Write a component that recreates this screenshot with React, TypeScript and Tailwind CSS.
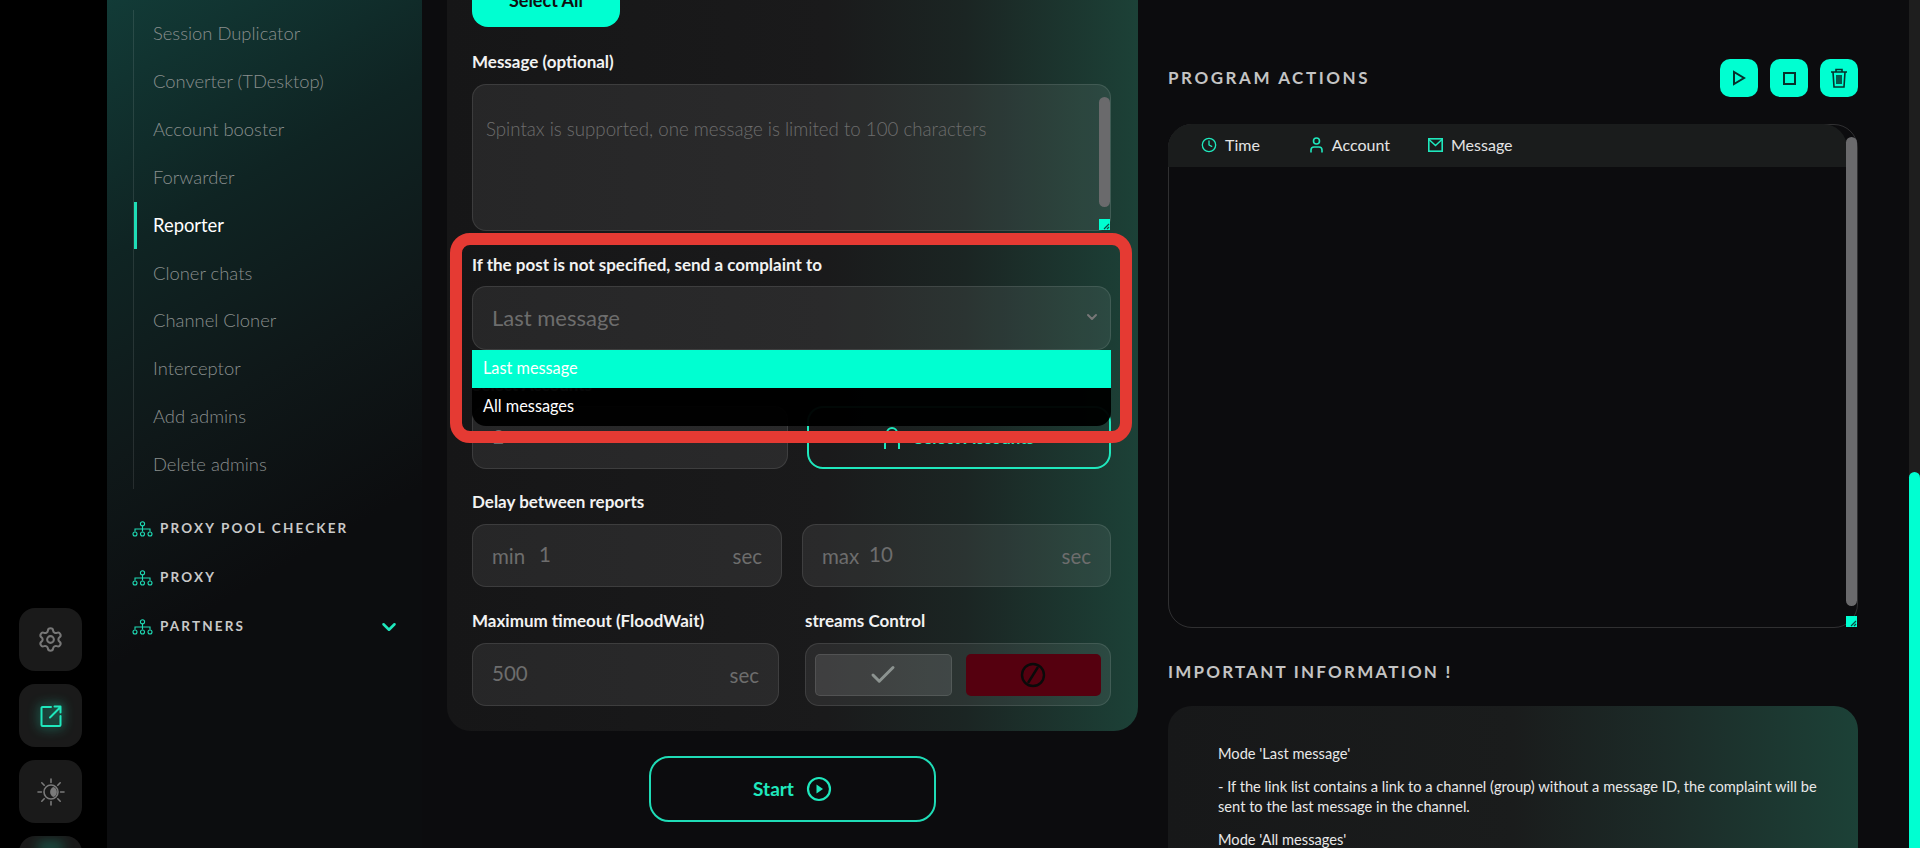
import React from "react";
import { Check, ChevronDown, Clock, Settings } from "lucide-react";

const TOOLS = [
	"Session Duplicator",
	"Converter (TDesktop)",
	"Account booster",
	"Forwarder",
	"Reporter",
	"Cloner chats",
	"Channel Cloner",
	"Interceptor",
	"Add admins",
	"Delete admins",
];

const SECTIONS = ["PROXY POOL CHECKER", "PROXY", "PARTNERS"];

const NetworkIcon = () => (
	<svg width="21" height="16" viewBox="0 0 21 16" fill="none" stroke="#1fdcb6" strokeWidth="1.1" className="shrink-0">
		<circle cx="10.5" cy="2.8" r="2.1" />
		<path d="M10.5 5v3M3 10.5V8h15v2.5M10.5 8v2.5" />
		<circle cx="3" cy="13" r="2" />
		<circle cx="10.5" cy="13" r="2" />
		<circle cx="18" cy="13" r="2" />
	</svg>
);

const ShareIcon = () => (
	<svg width="22" height="22" viewBox="0 0 22 22" fill="none" stroke="#1fe8bd" strokeWidth="2" strokeLinecap="round" strokeLinejoin="round" className="drop-shadow-[0_0_6px_#1fe8bd]">
		<path d="M11 2H2.5a1 1 0 0 0-1 1v17a1 1 0 0 0 1 1h17a1 1 0 0 0 1-1v-9" />
		<path d="M10 12.5 20 2.5M14.5 1.5H20.5V7.5" />
	</svg>
);

const SunMoonIcon = () => (
	<svg width="28" height="28" viewBox="0 0 28 28" fill="none" stroke="#7a7a7a" strokeWidth="1.6" strokeLinecap="round">
		<circle cx="14" cy="14" r="7" />
		<path d="M16.5 9a5.4 5.4 0 0 0 0 10 5.4 5.4 0 0 0 0-10z" fill="#7a7a7a" stroke="none" />
		<path d="M14 1v3.4M14 23.6V27M1 14h3.4M23.6 14H27M4.8 4.8l2.4 2.4M20.8 20.8l2.4 2.4M4.8 23.2l2.4-2.4M20.8 7.2l2.4-2.4" />
	</svg>
);

const SideButton = ({ children }: { children?: React.ReactNode }) => (
	<div className="w-[63px] h-[63px] shrink-0 rounded-[16px] bg-[#1a1a1a] flex items-center justify-center">
		{children}
	</div>
);

const Label = ({ children, className = "" }: { children: React.ReactNode; className?: string }) => (
	<div className={`h-5 leading-5 text-[17px] font-bold text-[#f2f2f2] whitespace-nowrap ${className}`}>
		{children}
	</div>
);

const Resizer = () => (
	<div className="absolute right-0 bottom-0 w-[11px] h-[11px] bg-[#00ffd1] flex items-end justify-end">
		<svg width="7" height="7" viewBox="0 0 7 7" stroke="#0b4a42" strokeWidth="1.2">
			<path d="M1 6 6 1M4 6l2-2" />
		</svg>
	</div>
);

const SecInput = ({ prefix, value, className }: { prefix?: string; value: string; className: string }) => (
	<div className={`h-[63px] rounded-[14px] border border-white/10 bg-white/[0.07] flex items-center pl-[19px] pr-[19px] text-[20.5px] text-[#6d6d6d] ${className}`}>
		{prefix && <span className="w-[47px] mt-[2px]">{prefix}</span>}
		<span className="-mt-[2px]">{value}</span>
		<span className="ml-auto mt-[2px]">sec</span>
	</div>
);

const App = () => (
	<div className="relative flex h-screen overflow-hidden bg-[#0c0c0e] [font-family:Lato,sans-serif]">
		{/* icon strip */}
		<div className="w-[107px] shrink-0 bg-black flex flex-col gap-[13px] pl-[19px] pt-[608px]">
			<SideButton>
				<Settings size={27} color="#777777" strokeWidth={1.8} />
			</SideButton>
			<SideButton>
				<ShareIcon />
			</SideButton>
			<SideButton>
				<SunMoonIcon />
			</SideButton>
			<div className="w-[63px] h-[63px] shrink-0 rounded-[16px] bg-[#1a1a1a] relative overflow-hidden">
				<div className="absolute left-[18px] top-[6px] w-[27px] h-[10px] rounded-full bg-[#1fe8bd]/30 blur-[6px]" />
			</div>
		</div>

		{/* navigation */}
		<div className="w-[315px] shrink-0 bg-[linear-gradient(150deg,#123b37_0%,#0f2423_25%,#0f1819_45%,#0c0d0f_65%)] pl-[26px] pr-[20px]">
			<div className="mt-[10px] border-l border-white/10 h-[479px] flex flex-col">
				{TOOLS.map((name) => {
					const active = name === "Reporter";
					return (
						<div key={name} className="h-[47.9px] shrink-0 flex items-center relative pl-[19px]">
							{active && <div className="absolute left-0 top-0 w-[3px] h-full bg-[#1fdcb6]" />}
							<span className={`text-[18.4px] whitespace-nowrap ${active ? "text-white font-normal" : "text-[#8a8f8e] font-light"}`}>
								{name}
							</span>
						</div>
					);
				})}
			</div>
			<div className="mt-[15px] flex flex-col">
				{SECTIONS.map((name) => (
					<div key={name} className="h-[49px] flex items-center gap-[7px] -ml-[1px]">
						<NetworkIcon />
						<span className="text-[13.5px] font-bold tracking-[0.16em] text-[#c9c9c9] whitespace-nowrap">{name}</span>
						{name === "PARTNERS" && <ChevronDown size={22} color="#1fe8bd" strokeWidth={2.8} className="ml-auto mr-[2px]" />}
					</div>
				))}
			</div>
		</div>

		{/* form */}
		<div className="ml-[25px] w-[691px] shrink-0 flex flex-col items-center -mt-[60px]">
			<div className="relative w-full rounded-[24px] bg-[linear-gradient(90deg,#161617_0%,#1a1a1b_55%,#1b2523_75%,#1c4137_100%)] pt-[33px] pb-[25px] pl-[25px] pr-[27px]">
				<div className="w-[148px] h-[54px] rounded-[16px] bg-[#00ffd1] flex items-center justify-center text-[18px] font-bold text-[#101010]">
					Select All
				</div>

				<Label className="mt-[25px]">Message (optional)</Label>
				<div className="relative mt-[12px] h-[147px] rounded-[14px] border border-white/10 bg-white/[0.07] pl-[13px] pt-[30px] text-[18.7px] font-light text-[#6d6d6d]">
					Spintax is supported, one message is limited to 100 characters
					<div className="absolute right-0 top-[12px] w-[11px] h-[110px] rounded-full bg-[#6a6a6c]" />
					<Resizer />
				</div>

				<Label className="mt-[24px]">If the post is not specified, send a complaint to</Label>
				<div className="mt-[11px] h-[64px] rounded-[14px] border border-white/10 bg-white/[0.07] flex items-center pl-[19px] pr-[10px] pb-[2px] text-[22px] text-[#6d6d6d]">
					Last message
					<ChevronDown size={16} color="#777777" strokeWidth={3} className="ml-auto" />
				</div>

				<Label className="mt-[25px]">Select Accounts</Label>
				<div className="mt-[11px] flex gap-[19px]">
					<div className="w-[316px] h-[63px] rounded-[14px] border border-white/10 bg-white/[0.07] flex items-center pl-[20px] text-[19px] text-[#6d6d6d]">
						2
					</div>
					<div className="flex-1 h-[63px] rounded-[16px] border-2 border-[#1fe8bd] flex items-center justify-center gap-[14px] text-[17px] font-bold text-[#1fe8bd]">
						<svg width="16" height="22" viewBox="0 0 16 22" fill="none" stroke="#1fe8bd" strokeWidth="2">
							<circle cx="8" cy="6" r="5" />
							<path d="M1 22v-5a4 4 0 0 1 4-4h6a4 4 0 0 1 4 4v5" />
						</svg>
						Select Accounts
					</div>
				</div>

				<Label className="mt-[23px]">Delay between reports</Label>
				<div className="mt-[12px] flex gap-[20px]">
					<SecInput prefix="min" value="1" className="w-[310px]" />
					<SecInput prefix="max" value="10" className="w-[309px]" />
				</div>

				<div className="mt-[24px] flex">
					<div className="w-[333px]">
						<Label>Maximum timeout (FloodWait)</Label>
						<SecInput value="500" className="mt-[12px] w-[307px]" />
					</div>
					<div className="w-[306px]">
						<Label>streams Control</Label>
						<div className="mt-[12px] h-[63px] rounded-[14px] border border-white/10 bg-white/[0.07] flex items-center gap-[14px] px-[9px]">
							<div className="w-[137px] h-[42px] rounded-[5px] border border-white/10 bg-white/[0.1] flex items-center justify-center">
								<Check size={30} color="#8c9390" strokeWidth={2.4} />
							</div>
							<div className="w-[136px] h-[42px] rounded-[5px] bg-[#55000f] flex items-center justify-center">
								<svg width="26" height="26" viewBox="0 0 26 26" fill="none" stroke="#0a0a0a" strokeWidth="2.4">
									<circle cx="13" cy="13" r="11" />
									<path d="M18 5 8 21" />
								</svg>
							</div>
						</div>
					</div>
				</div>

				{/* open dropdown over the fields */}
				<div className="absolute left-[25px] top-[410px] w-[639px] h-[76px] rounded-b-[14px] overflow-hidden bg-black/[0.97] text-[16.3px] z-10">
					<div className="h-[38px] bg-[#00ffd1] text-white flex items-center pl-[11px] pb-[2px]">Last message</div>
					<div className="h-[38px] text-white flex items-center pl-[11px] pb-[2px]">All messages</div>
				</div>
				{/* annotation frame */}
				<div className="absolute left-[3px] top-[293px] w-[682px] h-[210px] rounded-[20px] border-[12px] border-[#e53a33] z-20" />
			</div>

			<div className="mt-[25px] w-[287px] h-[66px] shrink-0 rounded-[20px] border-2 border-[#1fdcb6] flex items-center justify-center gap-[12px] text-[19px] font-bold text-[#1fe8bd]">
				Start
				<svg width="26" height="26" viewBox="0 0 26 26" fill="none" stroke="#1fe8bd" strokeWidth="2.2">
					<circle cx="13" cy="13" r="11" />
					<path d="M10.5 8.5 17 13l-6.5 4.5z" fill="#1fe8bd" stroke="none" />
				</svg>
			</div>
		</div>

		{/* right column */}
		<div className="ml-[30px] w-[690px] shrink-0 flex flex-col">
			<div className="mt-[59px] shrink-0 flex items-center justify-between">
				<span className="text-[17px] font-bold tracking-[0.15em] text-[#c4c4c4]">PROGRAM ACTIONS</span>
				<div className="flex gap-[12px]">
					<div className="w-[38px] h-[38px] rounded-[10px] bg-[#00ffd1] flex items-center justify-center">
						<svg width="14" height="16" viewBox="0 0 14 16" fill="none" stroke="#07302b" strokeWidth="2">
							<path d="M2 2v12l10-6z" />
						</svg>
					</div>
					<div className="w-[38px] h-[38px] rounded-[10px] bg-[#00ffd1] flex items-center justify-center">
						<div className="w-[13px] h-[13px] border-2 border-[#07302b]" />
					</div>
					<div className="w-[38px] h-[38px] rounded-[10px] bg-[#00ffd1] flex items-center justify-center">
						<svg width="18" height="20" viewBox="0 0 18 20" fill="none" stroke="#07302b" strokeWidth="1.6">
							<path d="M1 4h16M6 4V1.5h6V4M3 4l1 15h10l1-15M7 7v9M9 7v9M11 7v9" />
						</svg>
					</div>
				</div>
			</div>

			<div className="relative mt-[27px] h-[504px] shrink-0 rounded-[24px] border border-white/15 flex flex-col">
				<div className="h-[43px] mr-[10px] -mt-px -ml-px pb-[2px] rounded-t-[24px] bg-[#1a1c1c] flex items-center text-[16px] text-[#e4e4e4]">
					<Clock size={16} color="#1fe8bd" strokeWidth={2} className="ml-[33px]" />
					<span className="ml-[8px]">Time</span>
					<svg width="13" height="16" viewBox="0 0 13 16" fill="none" stroke="#1fe8bd" strokeWidth="1.6" className="ml-[50px]">
						<circle cx="6.5" cy="4" r="3" />
						<path d="M1 15.5V13a3 3 0 0 1 3-3h5a3 3 0 0 1 3 3v2.5" />
					</svg>
					<span className="ml-[9px]">Account</span>
					<svg width="15" height="14" viewBox="0 0 15 14" fill="none" stroke="#1fe8bd" strokeWidth="1.6" className="ml-[38px]">
						<rect x="0.8" y="0.8" width="13.4" height="12.4" />
						<path d="m1 1.5 6.5 6 6.5-6" />
					</svg>
					<span className="ml-[8px]">Message</span>
				</div>
				<div className="absolute right-0 top-[12px] w-[11px] h-[469px] rounded-full bg-[#6a6a6c]" />
				<Resizer />
			</div>

			<div className="mt-[34px] shrink-0 text-[17px] font-bold tracking-[0.13em] text-[#c4c4c4] leading-5">IMPORTANT INFORMATION !</div>

			<div className="mt-[24px] rounded-t-[24px] bg-[linear-gradient(90deg,#171819_0%,#1a1c1c_50%,#1c2b28_72%,#1c4137_100%)] pl-[50px] pr-[30px] pt-[38px] text-[14.65px] leading-[20px] text-[#e8e8e8] h-[200px] shrink-0">
				<p>Mode 'Last message'</p>
				<p className="mt-[13px]">- If the link list contains a link to a channel (group) without a message ID, the complaint will be sent to the last message in the channel.</p>
				<p className="mt-[13px]">Mode 'All messages'</p>
			</div>
		</div>

		{/* page scrollbar */}
		<div className="absolute right-0 top-0 bottom-0 w-[11px] bg-[#1e1e1e]">
			<div className="absolute left-0 right-0 top-[472px] bottom-0 rounded-t-full bg-[#00ffd1]" />
		</div>
	</div>
);

export default App;
